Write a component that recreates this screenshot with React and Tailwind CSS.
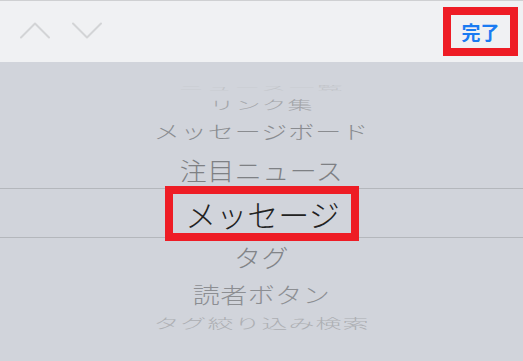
import React from "react";

const font = { fontFamily: '"Noto Sans CJK JP", "Noto Sans", sans-serif' };

function Chevron({ down }) {
  return (
    <svg width="30" height="17" viewBox="0 0 30 17" fill="none">
      <polyline
        points={down ? "1,1.5 15,15.5 29,1.5" : "1,15.5 15,1.5 29,15.5"}
        stroke="#d3d4d6"
        strokeWidth="2"
        strokeLinecap="round"
        strokeLinejoin="round"
      />
    </svg>
  );
}

export default function App() {
  return (
    <div className="w-[523px] h-[361px] flex flex-col overflow-hidden" style={font}>
      <div className="h-[62px] shrink-0 flex items-center justify-between bg-[#f0f1f3] border-t border-[#cfd0d2] pl-[20px] pr-[5px]">
        <div className="flex items-center gap-[22px] pb-[3px]">
          <Chevron />
          <Chevron down />
        </div>
        <div className="w-[75px] h-[49px] border-[8px] border-[#ee1c25] flex items-center justify-center">
          <span className="text-[19px] font-bold text-[#1a7bf2] leading-none">完了</span>
        </div>
      </div>
      <div className="flex-1 bg-[#d1d4db] flex flex-col font-light">
        <div className="h-[18px] shrink-0" />
        <div className="h-[16px] flex items-center justify-center">
          <span className="text-[26px] leading-none text-[#c2c4c9] scale-y-[0.22] tracking-[2px]">ニュース一覧</span>
        </div>
        <div className="h-[16px] flex items-center justify-center">
          <span className="text-[25px] leading-none text-[#a4a6aa] scale-y-[0.48] tracking-[1px]">リンク集</span>
        </div>
        <div className="h-[38px] flex items-center justify-center">
          <span className="text-[26px] leading-none text-[#8a8c90] scale-y-[0.72] tracking-[1px]">メッセージボード</span>
        </div>
        <div className="h-[38px] flex items-center justify-center">
          <span className="text-[27px] leading-none text-[#7e8084] scale-y-[0.9] tracking-[0.5px]">注目ニュース</span>
        </div>
        <div className="h-[50px] shrink-0 border-y border-[#b4b7bc] flex items-center justify-center">
          <div className="w-[194px] h-[55px] shrink-0 border-[8px] border-[#ee1c25] flex items-center justify-center">
            <span className="text-[31px] leading-none text-[#222222] pl-[2px]">メッセージ</span>
          </div>
        </div>
        <div className="h-[36px] flex items-center justify-center">
          <span className="text-[27px] leading-none text-[#828488] scale-y-[0.9] tracking-[0.5px]">タグ</span>
        </div>
        <div className="h-[40px] flex items-center justify-center">
          <span className="text-[27px] leading-none text-[#8c8e92] scale-y-[0.78] tracking-[0.5px]">読者ボタン</span>
        </div>
        <div className="h-[16px] flex items-center justify-center">
          <span className="text-[26px] leading-none text-[#adafb3] scale-y-[0.5] tracking-[1px]">タグ絞り込み検索</span>
        </div>
      </div>
    </div>
  );
}
